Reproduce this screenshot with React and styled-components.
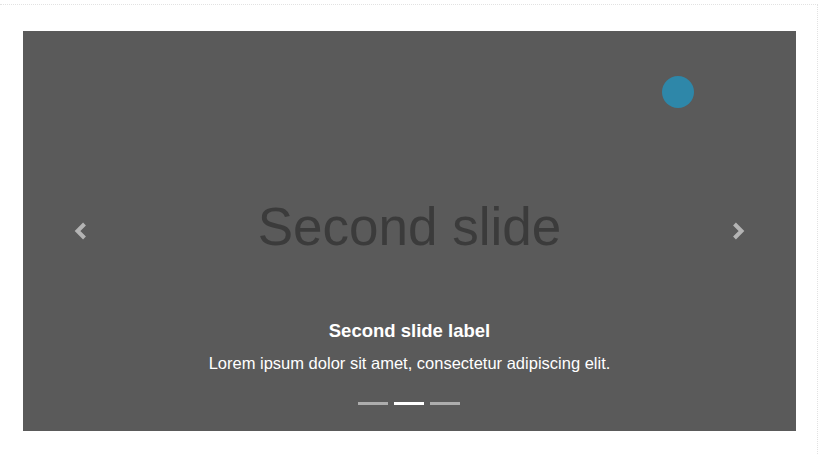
import React from 'react';
import styled, { createGlobalStyle } from 'styled-components';

const GlobalStyle = createGlobalStyle`
  html, body {
    margin: 0;
    padding: 0;
    background: #ffffff;
    font-family: 'Liberation Sans', Arial, sans-serif;
  }
`;

const Page = styled.div`
  width: 822px;
  height: 454px;
  padding-top: 4px;
  box-sizing: border-box;
`;

const Frame = styled.div`
  width: 818px;
  height: 450px;
  box-sizing: border-box;
  border-top: 1px dotted #e2e2e2;
  border-right: 1px dotted #e2e2e2;
  padding: 26px 0 0 23px;
`;

const Carousel = styled.div`
  position: relative;
  width: 773px;
  height: 400px;
  background: #5a5a5a;
  overflow: hidden;
  display: flex;
  flex-direction: column;
  align-items: center;
`;

const SlideText = styled.div`
  margin-top: 164px;
  font-size: 53px;
  line-height: 64px;
  color: #3b3b3b;
`;

const Caption = styled.div`
  margin-top: 60px;
  display: flex;
  flex-direction: column;
  align-items: center;
  color: #ffffff;
`;

const CaptionTitle = styled.h5`
  margin: 0;
  font-size: 18.5px;
  font-weight: 700;
  line-height: 24px;
`;

const CaptionText = styled.p`
  margin: 8px 0 0;
  font-size: 16.5px;
  line-height: 24px;
`;

const Indicators = styled.ol`
  list-style: none;
  margin: 27px 0 0;
  padding: 0;
  display: flex;
  gap: 6px;
  transform: translateX(-1px);
`;

const Indicator = styled.li`
  width: 30px;
  height: 3px;
  background: ${p => (p.$active ? '#ffffff' : 'rgba(255,255,255,0.5)')};
`;

const Control = styled.button`
  position: absolute;
  top: 0;
  bottom: 0;
  ${p => (p.$side === 'left' ? 'left: 0;' : 'right: 0;')}
  width: 116px;
  border: 0;
  padding: 0;
  background: transparent;
  display: flex;
  align-items: center;
  justify-content: center;
  cursor: pointer;
`;

const Dot = styled.div`
  position: absolute;
  left: 639px;
  top: 45px;
  width: 32px;
  height: 32px;
  border-radius: 50%;
  background: #2e87a9;
`;

const Chevron = ({ dir }) => (
  <svg width="16" height="20" viewBox="0 0 16 20">
    <path
      d={dir === 'left' ? 'M11.5 3 L4.5 10 L11.5 17' : 'M4.5 3 L11.5 10 L4.5 17'}
      fill="none"
      stroke="#b4b4b4"
      strokeWidth="4"
    />
  </svg>
);

export default function App() {
  return (
    <Page>
      <GlobalStyle />
      <Frame>
        <Carousel>
          <Dot />
          <SlideText>Second slide</SlideText>
          <Caption>
            <CaptionTitle>Second slide label</CaptionTitle>
            <CaptionText>Lorem ipsum dolor sit amet, consectetur adipiscing elit.</CaptionText>
          </Caption>
          <Indicators>
            <Indicator />
            <Indicator $active />
            <Indicator />
          </Indicators>
          <Control $side="left" aria-label="Previous">
            <Chevron dir="left" />
          </Control>
          <Control $side="right" aria-label="Next">
            <Chevron dir="right" />
          </Control>
        </Carousel>
      </Frame>
    </Page>
  );
}
